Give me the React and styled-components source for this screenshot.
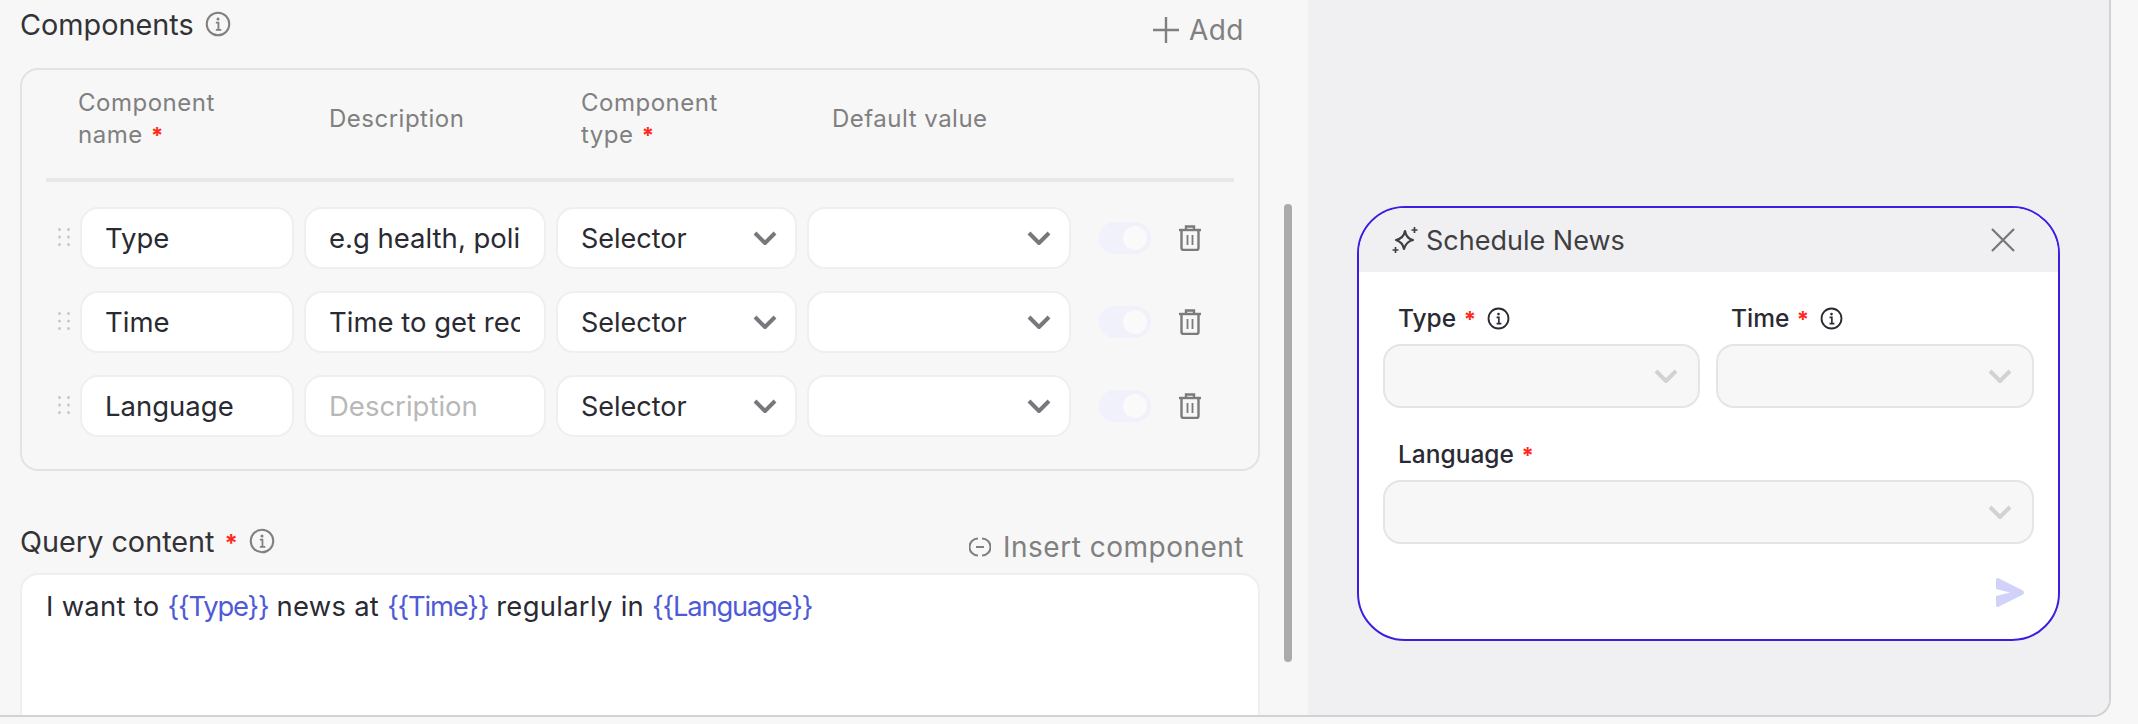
import React from "react";
import styled, { createGlobalStyle } from "styled-components";

const GlobalStyle = createGlobalStyle`
  html, body { margin: 0; padding: 0; background: #f7f7f7; }
  body { font-family: Inter, "Liberation Sans", sans-serif; overflow: hidden; }
  * { box-sizing: border-box; }
`;

const Page = styled.div`
  display: flex;
  width: 2111px;
  height: 717px;
  overflow: hidden;
  position: relative;
  border-right: 2px solid #d2d2d2;
  border-bottom: 2px solid #d2d2d2;
  border-bottom-right-radius: 18px;
`;

const EditorPane = styled.div`
  width: 1308px;
  flex: none;
  padding: 0 48px 0 20px;
  display: flex;
  flex-direction: column;
  background: #f7f7f7;
`;

const SectionHead = styled.div`
  display: flex;
  justify-content: space-between;
  height: ${(p) => p.$height}px;
  margin-top: ${(p) => p.$top || 0}px;
`;

const SectionTitle = styled.div`
  display: flex;
  align-items: center;
  height: 48px;
  font-size: 28.800px;
  font-weight: 400;
  color: #333336;
  gap: 11px;
`;

const Star = styled.span`
  color: #ff2a1a;
  font-weight: 700;
  font-size: ${(p) => p.$size || 24}px;
  margin-left: ${(p) => p.$left || 0}px;
`;

const HeadAction = styled.div`
  display: flex;
  align-items: center;
  gap: ${(p) => p.$gap}px;
  height: 60px;
  padding-right: 16px;
  font-size: 28px;
  color: #808080;
  letter-spacing: 0.5px;
`;

const TableCard = styled.div`
  height: 403px;
  flex: none;
  border: 2px solid #e3e3e3;
  border-radius: 18px;
`;

const TableHead = styled.div`
  height: 108px;
  padding: 0 0 10px 56px;
  display: grid;
  grid-template-columns: 251px 252px 251px 1fr;
  align-items: center;
  font-size: 24px;
  line-height: 32px;
  color: #808080;
  letter-spacing: 0.5px;
`;

const Divider = styled.div`
  height: 4px;
  margin: 0 24px;
  background: #e8e8e8;
`;

const Rows = styled.div`
  padding: 25px 0 0 26px;
  display: flex;
  flex-direction: column;
  gap: 22px;
`;

const Row = styled.div`
  display: grid;
  grid-template-columns: 22px 214px 242px 241px 264px 52px 22px;
  column-gap: 10px;
  align-items: center;
  height: 62px;
`;

const DragDots = styled.svg`
  width: 12px;
  height: 18px;
  justify-self: end;
  margin-right: 0;
  margin-top: -2px;
`;

const TextInput = styled.input`
  width: 100%;
  height: 62px;
  padding: 0 24px 0 23px;
  border: 2px solid #efefef;
  border-radius: 18px;
  background: #fff;
  outline: none;
  font: 400 27.500px Inter, "Liberation Sans", sans-serif;
  color: #2a2a33;
  &::placeholder { color: #b8b8b8; opacity: 1; }
`;

const Select = styled.div`
  height: ${(p) => p.$height || 62}px;
  display: flex;
  align-items: center;
  justify-content: space-between;
  padding: 0 ${(p) => (p.$disabled ? 20 : 18)}px 0 23px;
  border: 2px solid ${(p) => (p.$disabled ? "#e5e5e5" : "#efefef")};
  border-radius: 18px;
  background: ${(p) => (p.$disabled ? "#f7f7f7" : "#fff")};
  font-size: 27px;
  color: #2a2a33;
`;

const Toggle = styled.div`
  width: 52px;
  height: 32px;
  margin-left: 18px;
  padding: 4px;
  display: flex;
  justify-content: flex-end;
  border-radius: 16px;
  background: #f0f1fa;
`;

const Knob = styled.div`
  width: 24px;
  height: 24px;
  border-radius: 12px;
  background: #fafafa;
`;

const TrashBtn = styled.svg`
  width: 24px;
  height: 26px;
  margin-left: 35px;
`;

const QueryBox = styled.div`
  flex: 1;
  padding: 15px 24px;
  background: #fff;
  border: 2px solid #efefef;
  border-bottom: 0;
  border-radius: 18px 18px 0 0;
  font-size: 27.400px;
  line-height: 32px;
  letter-spacing: 0.3px;
  color: #2a2a33;
  white-space: pre;
`;

const Token = styled.span`
  color: #4f5bd5;
  letter-spacing: -1.200px;
`;

const Scrollbar = styled.div`
  position: absolute;
  left: 1284px;
  top: 204px;
  width: 8px;
  height: 458px;
  border-radius: 4px;
  background: #ababab;
`;

const PreviewPane = styled.div`
  flex: 1;
  background: #f0f0f3;
  padding: 206px 0 0 49px;
`;

const ChatCard = styled.div`
  width: 703px;
  height: 435px;
  border: 2px solid #3a1fe0;
  border-radius: 48px;
  background: #fff;
  overflow: hidden;
`;

const ChatHeader = styled.div`
  height: 64px;
  display: flex;
  align-items: center;
  justify-content: space-between;
  padding: 0 43px 0 33px;
  background: #f0f0f3;
`;

const ChatTitle = styled.div`
  display: flex;
  align-items: center;
  gap: 8px;
  font-size: 27px;
  color: #3f3f42;
`;

const Form = styled.div`
  padding: 28px 24px 0;
  display: grid;
  grid-template-columns: 317px 318px;
  column-gap: 16px;
`;

const Field = styled.div`
  grid-column: ${(p) => (p.$wide ? "1 / -1" : "auto")};
  margin-bottom: ${(p) => (p.$wide ? 0 : 28)}px;
`;

const FieldLabel = styled.div`
  height: 36px;
  display: flex;
  align-items: center;
  padding-left: 15px;
  margin-bottom: 8px;
  gap: 11px;
  font-size: 24.500px;
  font-weight: 500;
  color: #2a2a33;
`;

const ChatFoot = styled.div`
  display: flex;
  justify-content: flex-end;
  padding: 33px 33px 0 0;
`;

const Chevron = ({ color = "#77777d" }) => (
  <svg width="24" height="16" viewBox="0 0 24 16" fill="none">
    <path d="M2 3l10 10L22 3" stroke={color} strokeWidth="4" strokeLinejoin="round" />
  </svg>
);

const InfoIcon = ({ color = "#808080", size = 26 }) => (
  <svg width={size} height={size} viewBox="0 0 24 24" fill="none">
    <circle cx="12" cy="12" r="10.400" stroke={color} strokeWidth="1.900" />
    <circle cx="12" cy="7.400" r="1.400" fill={color} />
    <path d="M10 10.800h2.400v6.400M10 17.400h5" stroke={color} strokeWidth="1.700" />
  </svg>
);

const Dots = () => (
  <DragDots viewBox="0 0 12 18" fill="#c8c8c8">
    {[1.5, 10.5].map((x) =>
      [1.5, 9, 16.5].map((y) => <circle key={`${x}-${y}`} cx={x} cy={y} r="1.500" />)
    )}
  </DragDots>
);

const Trash = () => (
  <TrashBtn viewBox="0 0 24 26" fill="none" stroke="#7b7b7b" strokeWidth="2.400">
    <path d="M1 5h22" />
    <path d="M8 4V1.500h8V4" />
    <path d="M3.500 5v18a2 2 0 0 0 2 2h13a2 2 0 0 0 2-2V5" />
    <path d="M9.500 10v10M14.500 10v10" strokeWidth="1.800" />
  </TrashBtn>
);

const Sparkle = () => (
  <svg width="26" height="26" viewBox="0 0 26 26" fill="none" stroke="#3f3f42" strokeWidth="2.200">
    <path d="M13 4c1 5.500 3 8 8 9-4.500 1-7.500 3.500-9 9-1-5-3-7.500-8-9 4.500-1 8-3.500 9-9z" strokeLinejoin="round" />
    <path d="M22.500 0v6M19.500 3h6M3.500 20v6M.5 23h6" strokeWidth="1.700" />
  </svg>
);

const LinkIcon = () => (
  <svg width="22" height="22" viewBox="0 0 22 22" fill="none" stroke="#808080" strokeWidth="2">
    <path d="M9 2.500A8.500 8.500 0 0 0 9 19.500M13 2.500A8.500 8.500 0 0 1 13 19.500" />
    <path d="M7 11h8" />
  </svg>
);

const rows = [
  { name: "Type", desc: "e.g health, politics" },
  { name: "Time", desc: "Time to get receive news" },
  { name: "Language", desc: "" },
];

export default function App() {
  return (
    <>
      <GlobalStyle />
      <Page>
        <EditorPane>
          <SectionHead $height={68}>
            <SectionTitle>
              Components
              <InfoIcon />
            </SectionTitle>
            <HeadAction $gap={10}>
              <svg width="26" height="26" viewBox="0 0 26 26" stroke="#808080" strokeWidth="2.400">
                <path d="M13 0v26M0 13h26" />
              </svg>
              Add
            </HeadAction>
          </SectionHead>

          <TableCard>
            <TableHead>
              <div>
                Component
                <br />
                name <Star $size={22} $left={1}>*</Star>
              </div>
              <div>Description</div>
              <div>
                Component
                <br />
                type <Star $size={22} $left={1}>*</Star>
              </div>
              <div>Default value</div>
            </TableHead>
            <Divider />
            <Rows>
              {rows.map((row) => (
                <Row key={row.name}>
                  <Dots />
                  <TextInput readOnly value={row.name} />
                  <TextInput readOnly value={row.desc} placeholder="Description" />
                  <Select>
                    Selector
                    <Chevron />
                  </Select>
                  <Select>
                    <span />
                    <Chevron />
                  </Select>
                  <Toggle>
                    <Knob />
                  </Toggle>
                  <Trash />
                </Row>
              ))}
            </Rows>
          </TableCard>

          <SectionHead $height={56} $top={46}>
            <SectionTitle>
              <span>
                Query content <Star $left={2}>*</Star>
              </span>
              <InfoIcon />
            </SectionTitle>
            <HeadAction $gap={12}>
              <LinkIcon />
              Insert component
            </HeadAction>
          </SectionHead>

          <QueryBox>
            I want to <Token>{"{{Type}}"}</Token> news at <Token>{"{{Time}}"}</Token> regularly in{" "}
            <Token>{"{{Language}}"}</Token>
          </QueryBox>
        </EditorPane>

        <Scrollbar />

        <PreviewPane>
          <ChatCard>
            <ChatHeader>
              <ChatTitle>
                <Sparkle />
                Schedule News
              </ChatTitle>
              <svg width="24" height="24" viewBox="0 0 24 24" stroke="#77777a" strokeWidth="2.200">
                <path d="M1 1l22 22M23 1L1 23" />
              </svg>
            </ChatHeader>
            <Form>
              <Field>
                <FieldLabel>
                  <span>Type <Star $size={22} $left={1}>*</Star></span>
                  <InfoIcon color="#2a2a33" size={23} />
                </FieldLabel>
                <Select $disabled $height={64}>
                  <span />
                  <Chevron color="#d2d2d2" />
                </Select>
              </Field>
              <Field>
                <FieldLabel>
                  <span>Time <Star $size={22} $left={1}>*</Star></span>
                  <InfoIcon color="#2a2a33" size={23} />
                </FieldLabel>
                <Select $disabled $height={64}>
                  <span />
                  <Chevron color="#d2d2d2" />
                </Select>
              </Field>
              <Field $wide>
                <FieldLabel>
                  <span>Language <Star $size={22} $left={1}>*</Star></span>
                </FieldLabel>
                <Select $disabled $height={64}>
                  <span />
                  <Chevron color="#d2d2d2" />
                </Select>
              </Field>
            </Form>
            <ChatFoot>
              <svg width="30" height="31" viewBox="0 0 30 31" fill="#d0d2fa">
                <path d="M1 3Q1 0 4 1.500L28 13.500Q30 15.500 28 17.500L4 29.500Q1 31 1 28L1 19L15 15.500L1 12Z" />
              </svg>
            </ChatFoot>
          </ChatCard>
        </PreviewPane>
      </Page>
    </>
  );
}
